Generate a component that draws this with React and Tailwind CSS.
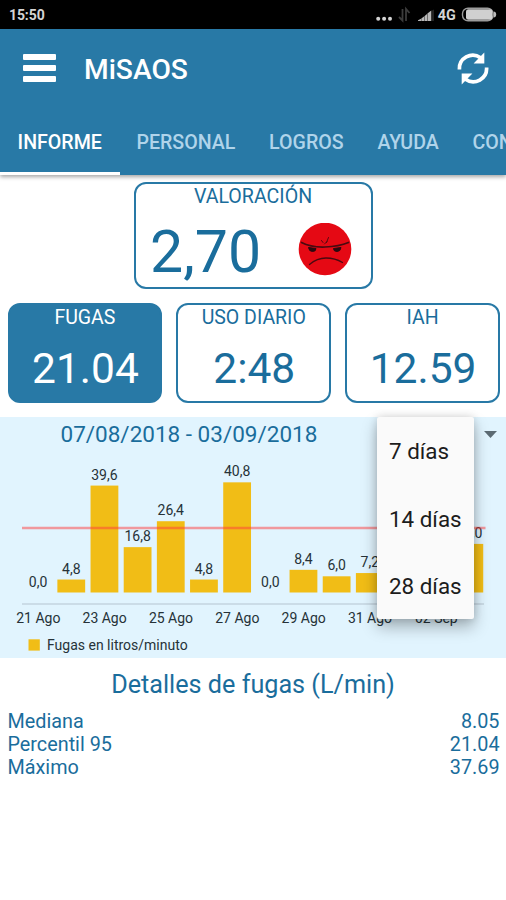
const TABS = ["PERSONAL", "LOGROS", "AYUDA", "CONTACTO"];

const BARS = [0, 4.8, 39.6, 16.8, 26.4, 4.8, 40.8, 0, 8.4, 6, 7.2, null, null, 18];

const DAYS = ["21 Ago", "23 Ago", "25 Ago", "27 Ago", "29 Ago", "31 Ago", "02 Sep"];

const DETAILS = [
  ["Mediana", "8.05"],
  ["Percentil 95", "21.04"],
  ["Máximo", "37.69"],
];

function StatusBar() {
  return (
    <div className="flex h-[28.5px] items-center justify-between bg-black pl-[9px] pr-[4px] text-[#d4d4d4]">
      <span className="text-[14px] font-bold leading-[28px] tracking-[-0.1px] pt-[1px]">15:50</span>
      <svg className="h-[28px] w-[130px]" viewBox="0 0 130 28">
        <g fill="#d4d4d4">
          <circle cx="6.2" cy="18.8" r="2" />
          <circle cx="12.1" cy="18.8" r="2" />
          <circle cx="18" cy="18.8" r="2" />
          <path d="M46 21V20.2L49 18.7V21ZM49.3 18.4 52 16.5V21H49.3ZM52.4 16.2 55 14V21H52.4ZM55.4 13.6 59.3 10.5V21H55.4Z" fill="#b8b8b8" />
        </g>
        <path d="M60 10.5 62 9.5V21H60Z" fill="#222" />
        <path d="M27 17 30.5 20.5V9M34 21V9L37.5 13" fill="none" stroke="#3c3c3c" strokeWidth="1.8" />
        <text x="65.7" y="20" fontSize="14" fontWeight="700" fill="#d4d4d4" textLength="18" lengthAdjust="spacingAndGlyphs">4G</text>
        <rect x="90.5" y="8.2" width="30.5" height="12.6" rx="5.5" fill="none" stroke="#9c9c9c" strokeWidth="1.4" />
        <rect x="94" y="9.2" width="26.4" height="10.6" rx="2.5" fill="#d0d0d0" />
        <path d="M121.5 11.5Q124.2 11.5 124.2 14.5T121.5 17.5Z" fill="#bbb" />
      </svg>
    </div>
  );
}

function RefreshIcon() {
  return (
    <svg className="h-[36px] w-[36px]" viewBox="0 0 36 36" fill="none">
      <path d="M4.4 19.5A13.4 13.4 0 0 1 25.5 7.7" stroke="#fff" strokeWidth="3.7" />
      <path d="M29.3 2.5V13.5H18.6Z" fill="#fff" />
      <path d="M31.6 17.5A13.4 13.4 0 0 1 10.5 29.3" stroke="#fff" strokeWidth="3.7" />
      <path d="M6.7 34.5V23.5H17.4Z" fill="#fff" />
    </svg>
  );
}

function Header() {
  return (
    <header className="relative z-10 h-[146px] bg-[#2879a6] text-white shadow-[0_2px_4px_rgba(0,0,0,0.35)]">
      <div className="flex h-[78px] items-center pl-[22.5px] pr-[15px]">
        <div className="flex w-[33.5px] flex-col gap-[5px]">
          <span className="h-[6px] rounded-[1px] bg-white" />
          <span className="h-[6px] rounded-[1px] bg-white" />
          <span className="h-[6px] rounded-[1px] bg-white" />
        </div>
        <h1 className="ml-[28px] flex-1 pt-[4px] text-[28.2px] font-medium leading-[34px]">MiSAOS</h1>
        <RefreshIcon />
      </div>
      <nav className="flex h-[68px] overflow-hidden text-[19.6px] font-medium leading-[72px]">
        <div className="h-[68px] w-[119.5px] shrink-0 border-b-[3px] border-white text-center">INFORME</div>
        {TABS.map((tab) => (
          <div key={tab} className="shrink-0 px-[16.9px] text-[#b0d4ea]">{tab}</div>
        ))}
      </nav>
    </header>
  );
}

function AngryFace() {
  return (
    <svg className="h-[54px] w-[54px]" viewBox="0 0 54 54">
      <circle cx="27" cy="26" r="26.3" fill="#e50914" />
      <g fill="none" stroke="#4a0a10" strokeLinecap="round">
        <path d="M3.5 19.5Q13 24.5 27 24T50.5 19.5" strokeWidth="1.7" />
        <path d="M11.5 41.5Q19 35 28 35T44.5 39.5" strokeWidth="1.3" />
        <path d="M23.5 17.5 25 19.5M30.5 14.5 28.5 19.5M26.5 21 29 18.5" strokeWidth="0.9" />
      </g>
      <path d="M10.5 24.5 18 25.5Q18 28.5 14.5 28.5T10.5 24.5ZM43 24.5 35.5 25.5Q35.5 28.5 39 28.5T43 24.5Z" fill="#2a0a10" stroke="#2a0a10" />
    </svg>
  );
}

function Metric({ label, value, active }) {
  return (
    <div
      className={`flex h-[100px] flex-1 flex-col items-center rounded-[12px] border-2 border-[#2879a6] ${
        active ? "bg-[#2879a6] text-white" : "bg-white text-[#1a6d9c]"
      }`}
    >
      <div className="text-[19.5px] leading-[25px]">{label}</div>
      <div className="mt-[14px] pl-[1px] text-[42.5px] leading-[50px]">{value}</div>
    </div>
  );
}

function LeakChart() {
  return (
    <svg className="block h-[206px] w-[506px]" viewBox="0 452 506 206" fontSize="14" fill="#263238">
      <path d="M22 604H484" stroke="#c3d5df" strokeWidth="1.3" />
      {BARS.map((value, i) => {
        if (value === null) return null;
        const x = 24.2 + 33.17 * i;
        const top = 592.5 - value * 2.7;
        return (
          <g key={i}>
            <rect x={x} y={top} width="27.8" height={value * 2.7} fill="#f1bd16" />
            <text x={x + 13.9} y={top - 6} textAnchor="middle">
              {value.toFixed(1).replace(".", ",")}
            </text>
          </g>
        );
      })}
      <path d="M22 527.9H485.5" stroke="#ff3b3b" strokeOpacity="0.5" strokeWidth="2.5" />
      {DAYS.map((day, i) => (
        <text key={day} x={38.3 + 66.34 * i} y="622.7" textAnchor="middle">{day}</text>
      ))}
      <rect x="28.5" y="639.3" width="11.3" height="11.3" fill="#f1bd16" />
      <text x="47" y="650.3">Fugas en litros/minuto</text>
    </svg>
  );
}

function RangeMenu() {
  return (
    <div className="absolute left-[377px] top-0 h-[202px] w-[96.5px] rounded-[2px] bg-[#fafafa] pl-[12px] text-[22.4px] text-[#1c1c1c] shadow-[0_8px_16px_rgba(0,0,0,0.28),0_0_8px_rgba(0,0,0,0.14)]">
      <div className="h-[67.5px] leading-[68px]">7 días</div>
      <div className="h-[67.5px] leading-[68px]">14 días</div>
      <div className="h-[67px] leading-[68px]">28 días</div>
    </div>
  );
}

export default function App() {
  return (
    <div className="h-[900px] w-[506px] overflow-hidden bg-white font-['Roboto',sans-serif] text-[#1a6d9c]">
      <StatusBar />
      <Header />
      <main>
        <section className="mx-auto mt-[7.5px] h-[107px] w-[239px] rounded-[12px] border-2 border-[#2879a6]">
          <div className="pt-[1px] text-center text-[19.6px] leading-[24px]">VALORACIÓN</div>
          <div className="flex h-[82px] items-center justify-between pl-[14.5px] pr-[19px]">
            <span className="pt-[3px] text-[59px] leading-[82px]">2,70</span>
            <AngryFace />
          </div>
        </section>
        <section className="mt-[13.5px] flex gap-[14px] pl-[7.5px] pr-[6px]">
          <Metric label="FUGAS" value="21.04" active />
          <Metric label="USO DIARIO" value="2:48" />
          <Metric label="IAH" value="12.59" />
        </section>
        <section className="relative mt-[14.5px] h-[241px] bg-[#e1f4fe]">
          <div className="flex h-[35px] items-center justify-between pl-[60.5px] pr-[9px]">
            <span className="text-[22.5px] leading-[35px]">07/08/2018 - 03/09/2018</span>
            <svg className="h-[7px] w-[13px]" viewBox="0 0 13 7">
              <path d="M0 0H13L6.5 7Z" fill="#5c6b73" />
            </svg>
          </div>
          <LeakChart />
          <RangeMenu />
        </section>
        <h2 className="mt-[10px] text-center text-[25.2px] leading-[34px]">Detalles de fugas (L/min)</h2>
        <dl className="mt-[8px] pl-[7.5px] pr-[6.5px] text-[19.8px] leading-[23px]">
          {DETAILS.map(([name, value]) => (
            <div key={name} className="flex justify-between">
              <dt>{name}</dt>
              <dd>{value}</dd>
            </div>
          ))}
        </dl>
      </main>
    </div>
  );
}
